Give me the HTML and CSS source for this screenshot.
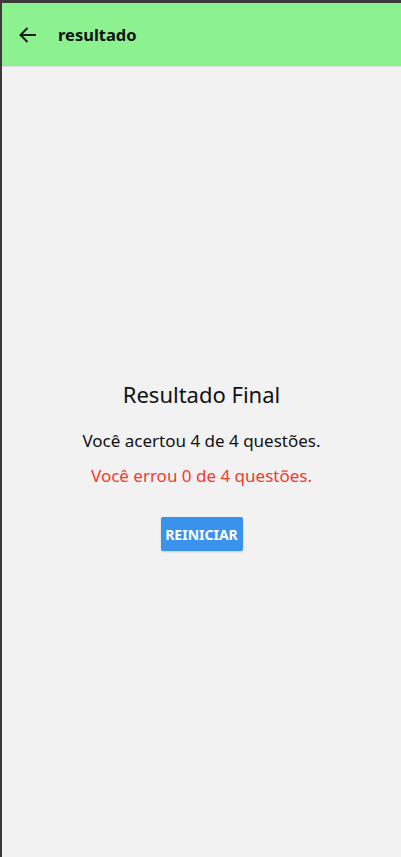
FILE: index.html
```html
<!DOCTYPE html>
<html>
<head>
<meta charset="utf-8">
<link rel="stylesheet" href="styles.css">
</head>
<body>
<div class="frame">
  <header class="appbar">
    <svg class="back" width="20" height="20" viewBox="0 0 20 20"><path d="M18 10H2.5M9.5 3L2.5 10l7 7" fill="none" stroke="#1a1a1a" stroke-width="2"/></svg>
    <span class="title">resultado</span>
  </header>
  <main class="content">
    <h1 class="heading">Resultado Final</h1>
    <p class="ok">Você acertou 4 de 4 questões.</p>
    <p class="bad">Você errou 0 de 4 questões.</p>
    <button class="btn">REINICIAR</button>
  </main>
</div>
</body>
</html>
```
FILE: styles.css
```css
html, body { margin: 0; padding: 0; height: 100%; }
body {
  background: #3a3a3a;
  font-family: "Noto Sans", "Open Sans", sans-serif;
}
.frame {
  margin: 3px 0 0 2px;
  height: calc(100% - 3px);
  background: #f2f2f2;
  display: flex;
  flex-direction: column;
}
.appbar {
  background: #8bf28f;
  display: flex;
  align-items: center;
  border-bottom: 1px solid #dcdcdc;
  box-sizing: border-box;
  height: 64px;
}
.back { margin-left: 16px; margin-right: 20px; }
.title { font-size: 16.5px; font-weight: 700; color: #111; }
.content {
  flex: 1;
  display: flex;
  flex-direction: column;
  align-items: center;
  padding-top: 312px;
}
.heading { margin: 0; font-size: 22px; font-weight: 400; color: #111; line-height: 30px; }
.ok { margin: 20px 0 0; font-size: 17px; color: #111; line-height: 24px; }
.bad { margin: 11px 0 0; font-size: 17px; color: #f4392e; line-height: 24px; }
.btn {
  margin-top: 29px;
  background: #3993ec;
  color: #fff;
  border: none;
  border-radius: 2px;
  font-family: inherit;
  font-weight: 700;
  font-size: 14px;
  width: 82px;
  height: 34px;
  padding: 0;
  box-shadow: 0 1px 2px rgba(0,0,0,0.15);
}
```
